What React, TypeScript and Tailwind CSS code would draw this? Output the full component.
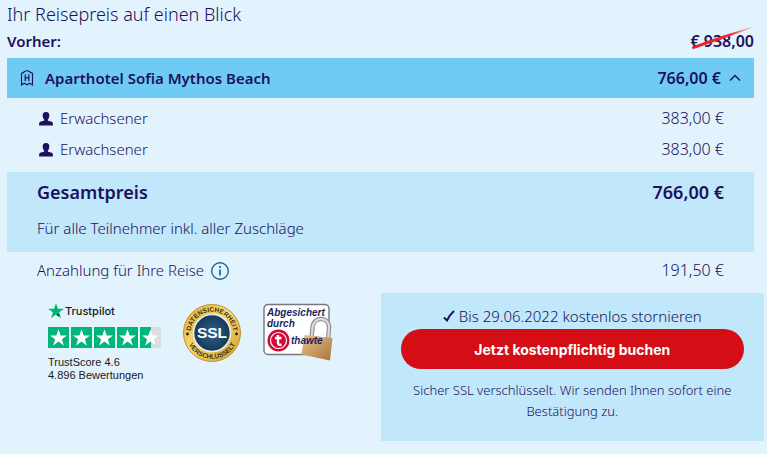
import { Fragment } from "react";

const travellers = [
  { label: "Erwachsener", price: "383,00 €" },
  { label: "Erwachsener", price: "383,00 €" },
];

const STAR = "M10 1.5 L12.1 7.6 H18.5 L13.4 11.4 L15.3 17.6 L10 13.8 L4.7 17.6 L6.6 11.4 L1.5 7.6 H7.9 Z";

function HotelIcon() {
  return (
    <svg width="14" height="16" viewBox="0 0 14 16" fill="none" stroke="currentColor" aria-hidden="true">
      <path d="M1.5 15 V3.2 Q3.6 3 4.6 1.4 Q7 .2 9.4 1.4 Q10.4 3 12.5 3.2 V15 L9.8 13.2 L7 14.8 L4.2 13.2 Z" strokeWidth="1.1" />
      <path d="M5.2 4.5 V11 M8.8 4.5 V11 M5.2 7.8 H8.8" strokeWidth="1.2" />
    </svg>
  );
}

function PersonIcon() {
  return (
    <svg width="14" height="14" viewBox="0 0 14 14" fill="currentColor" aria-hidden="true">
      <path d="M7 0 C9.5 0 10.4 1.5 10.3 3.6 C10.2 5.7 9.6 7 8.8 7.8 V8.4 C9.6 9 13 9.2 13.7 10.6 L14 13.4 H0 L.3 10.6 C1 9.2 4.4 9 5.2 8.4 V7.8 C4.4 7 3.8 5.7 3.7 3.6 C3.6 1.5 4.5 0 7 0 Z" />
    </svg>
  );
}

function Trustpilot() {
  return (
    <div className="flex flex-col font-['Liberation_Sans',Arial,sans-serif] font-normal text-[#191919]">
      <div className="flex items-center gap-px leading-4">
        <svg width="16" height="16" viewBox="0 0 20 20" aria-hidden="true">
          <path d="M10 0 L12.4 7.2 H20 L13.9 11.7 L16.2 19 L10 14.5 L3.8 19 L6.1 11.7 L0 7.2 H7.6 Z" fill="#00b67a" />
          <path d="M14.4 13.3 L10 14.5 L13.6 17.1 Z" fill="#005128" />
        </svg>
        <span className="font-['Inter',sans-serif] text-[11px] font-medium">Trustpilot</span>
      </div>
      <svg className="mt-2" width="113" height="21" viewBox="0 0 113 21" role="img" aria-label="4.6 von 5 Sternen">
        {[0, 23, 46, 69, 92].map((x, i) => (
          <Fragment key={x}>
            <rect x={x} width="21" height="21" fill={i === 4 ? "#dcdce6" : "#00b67a"} />
            {i === 4 && <rect x={x} width="11" height="21" fill="#00b67a" />}
            <path d={STAR} fill="#fff" transform={`translate(${x + 0.5} .8)`} />
          </Fragment>
        ))}
      </svg>
      <p className="mt-2 text-[11px] leading-[13px]">
        TrustScore <span className="font-medium">4.6</span>
        <br />
        <span className="font-medium">4.896</span> Bewertungen
      </p>
    </div>
  );
}

function SslSeal() {
  return (
    <svg width="60" height="60" viewBox="0 0 60 60" role="img" aria-label="SSL Datensicherheit verschlüsselt">
      <defs>
        <linearGradient id="gold" x1="0" y1="0" x2="1" y2="1">
          <stop offset="0" stopColor="#d9a834" />
          <stop offset=".45" stopColor="#f7dc72" />
          <stop offset="1" stopColor="#d29a2c" />
        </linearGradient>
        <radialGradient id="navy">
          <stop offset="0" stopColor="#2f6690" />
          <stop offset="1" stopColor="#153757" />
        </radialGradient>
        <path id="sealTop" d="M8.8 30 A21.2 21.2 0 0 1 51.2 30" />
        <path id="sealBottom" d="M4.2 30 A25.8 25.8 0 0 0 55.8 30" />
      </defs>
      <circle cx="30" cy="30" r="28.5" fill="url(#gold)" stroke="#c3922e" />
      <circle cx="30" cy="30" r="18.5" fill="url(#navy)" stroke="#e9edf0" strokeWidth="1.6" />
      <g fontFamily="Liberation Sans, Arial, sans-serif" fontWeight="700" textAnchor="middle">
        <text x="30" y="35" fontSize="15.5" fill="#fff">SSL</text>
        <g fontSize="6.6" fill="#3b3013">
          <text><textPath href="#sealTop" startOffset="50%">DATENSICHERHEIT</textPath></text>
          <text><textPath href="#sealBottom" startOffset="50%">VERSCHLÜSSELT</textPath></text>
        </g>
      </g>
      <circle cx="5.5" cy="31" r="1.4" fill="#2c2510" />
      <circle cx="54.5" cy="31" r="1.4" fill="#2c2510" />
    </svg>
  );
}

function ThawteBadge() {
  return (
    <svg width="72" height="58" viewBox="0 0 72 58" role="img" aria-label="Abgesichert durch thawte">
      <defs>
        <linearGradient id="brass" x1="0" y1="0" x2="1" y2="1">
          <stop offset="0" stopColor="#e6c48d" />
          <stop offset="1" stopColor="#a8753a" />
        </linearGradient>
      </defs>
      <rect x="1" y="1.5" width="65" height="50" rx="4" fill="#fff" stroke="#77777d" strokeWidth="1.4" />
      <circle cx="15.5" cy="37.5" r="11" fill="#cf0a35" />
      <circle cx="15.5" cy="37.5" r="8" fill="none" stroke="#fff" strokeWidth="1.2" />
      <path d="M15 32 V40 Q15 42.3 18.5 41.6 M12 35 H18.5" fill="none" stroke="#fff" strokeWidth="2.4" />
      <path d="M48.5 35 L49.5 24 C51 12.5 67 14 66 25 L65 37" fill="none" stroke="#8d8d91" strokeWidth="4.4" />
      <path d="M48.5 35 L49.5 24 C51 12.5 67 14 66 25 L65 37" fill="none" stroke="#dcdce0" strokeWidth="2.2" />
      <path d="M41.5 32 L69.5 35 L67 57.5 L38.5 51.5 Z" fill="url(#brass)" />
      <g fontFamily="Liberation Sans, Arial, sans-serif" fontWeight="700" fontStyle="italic" fontSize="10" fill="#211f63">
        <text x="4" y="13">Abgesichert</text>
        <text x="4" y="24">durch</text>
        <text x="28" y="41">thawte</text>
      </g>
    </svg>
  );
}

export default function App() {
  return (
    <main className="min-h-screen bg-[#e2f3fe] font-['Noto_Sans',sans-serif] text-[15px] font-light text-[#1b115c]">
      <section className="pr-[13px] pl-[7px]">
        <h1 className="text-[18px] leading-[29px]">Ihr Reisepreis auf einen Blick</h1>
        <div className="flex justify-between pb-[5px] leading-6 font-semibold">
          <span>Vorher:</span>
          <span className="relative text-[16px]">
            € 938,00
            <svg className="absolute -top-1 left-0 h-6 w-17" viewBox="0 0 68 24" aria-hidden="true">
              <defs>
                <linearGradient id="strike">
                  <stop offset="0" stopColor="#f3191f" />
                  <stop offset=".6" stopColor="#ee3036" />
                  <stop offset="1" stopColor="#f3a0a6" stopOpacity=".5" />
                </linearGradient>
              </defs>
              <path d="M2.2 23.6 Q1 22.5 2.5 21.5 Q32 10 66 1 Q38 12.5 3.5 24 Z" fill="url(#strike)" />
            </svg>
          </span>
        </div>

        <button type="button" aria-expanded="true" className="flex h-10 w-full items-center bg-[#70cbf4] px-[13px] font-semibold">
          <HotelIcon />
          <span className="ml-[11px]">Aparthotel Sofia Mythos Beach</span>
          <span className="ml-auto text-[16px]">766,00 €</span>
          <svg className="ml-2" width="12" height="8" viewBox="0 0 12 8" fill="none" stroke="currentColor" strokeWidth="1.3" aria-hidden="true">
            <path d="M1 6.5 L6 1.5 L11 6.5" />
          </svg>
        </button>

        <ul className="px-[30px] pt-[5px] pb-[7px] leading-[31px]">
          {travellers.map((traveller, i) => (
            <li key={i} className="flex items-center">
              <span className="mx-[2px]">
                <PersonIcon />
              </span>
              <span className="ml-[5px]">{traveller.label}</span>
              <span className="ml-auto text-[16px]">{traveller.price}</span>
            </li>
          ))}
        </ul>

        <div className="bg-[#c1e7fa] px-[30px] pt-1 pb-2">
          <div className="flex justify-between text-[18px] leading-8 font-semibold">
            <h2>Gesamtpreis</h2>
            <span>766,00 €</span>
          </div>
          <p className="pt-1 leading-8">Für alle Teilnehmer inkl. aller Zuschläge</p>
        </div>

        <div className="flex items-center px-[30px] pb-1 leading-[37px]">
          <span>Anzahlung für Ihre Reise</span>
          <button type="button" aria-label="Information" className="ml-[6px] text-[#22699c]">
            <svg width="20" height="20" viewBox="0 0 20 20" fill="none" stroke="currentColor" strokeWidth="1.4">
              <circle cx="10" cy="10" r="8.3" />
              <path d="M10 8.5 V14.5" strokeWidth="1.8" />
              <path d="M10 5 V7" strokeWidth="1.8" />
            </svg>
          </button>
          <span className="ml-auto text-[16px]">191,50 €</span>
        </div>
      </section>

      <section className="flex">
        <div className="flex flex-1 items-start gap-[21px] pt-[10px] pl-12">
          <Trustpilot />
          <SslSeal />
          <ThawteBadge />
        </div>
        <div className="mr-[3px] w-1/2 bg-[#c1e7fa] px-5 pt-[11px] pb-[19px] text-center">
          <p className="flex items-center justify-center gap-1 pb-px leading-6">
            <svg width="12" height="12" viewBox="0 0 12 12" fill="none" stroke="currentColor" aria-hidden="true">
              <path d="M1 7.5 L4 10.5 Q6.5 5 11 1" strokeWidth="1.9" />
            </svg>
            Bis 29.06.2022 kostenlos stornieren
          </p>
          <button type="button" className="h-10 w-full rounded-full bg-[#d40e14] font-['Inter',sans-serif] text-[14px] font-bold text-white">
            Jetzt kostenpflichtig buchen
          </button>
          <p className="pt-[11px] text-[13px] leading-[21px]">
            Sicher SSL verschlüsselt. Wir senden Ihnen sofort eine Bestätigung zu.
          </p>
        </div>
      </section>
    </main>
  );
}
